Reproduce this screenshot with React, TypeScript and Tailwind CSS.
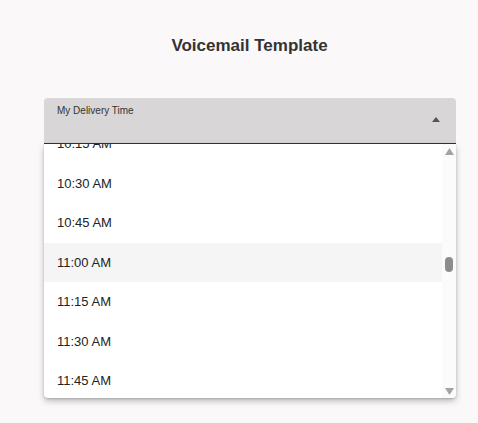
import React from "react";

const times = ["10:15 AM", "10:30 AM", "10:45 AM", "11:00 AM", "11:15 AM", "11:30 AM", "11:45 AM"];

const Triangle = ({ up, w = 8, h = 5, className }: { up?: boolean; w?: number; h?: number; className?: string }) => (
  <svg width={w} height={h} viewBox={`0 0 ${w} ${h}`} className={className}>
    {up ? (
      <path d={`M0 ${h} L${w / 2} 0 L${w} ${h} Z`} fill="currentColor" />
    ) : (
      <path d={`M0 0 L${w / 2} ${h} L${w} 0 Z`} fill="currentColor" />
    )}
  </svg>
);

const App = () => {
  return (
    <div className="w-full h-[423px] bg-[#faf8f9] font-['Liberation_Sans',Arial,sans-serif] text-[#333] overflow-hidden">
      <h1 className="pt-[36px] pl-[21px] text-center text-[17px] leading-[20px] font-bold text-[#333]">Voicemail Template</h1>

      <div className="relative mx-[44px] mt-[42px] w-[412px]">
        {/* select field */}
        <div className="h-[46px] bg-[#d8d6d7] rounded-t-[4px] border-b border-[#333] relative">
          <span className="absolute left-[13px] top-[6px] text-[10px] leading-[13px] text-[#333]">My Delivery Time</span>
          <Triangle up className="absolute right-[16px] top-[19px] text-[#555]" />
        </div>

        {/* dropdown */}
        <div className="absolute left-0 top-[46px] w-[412px] h-[254px] bg-white rounded-b-[4px] shadow-[0_3px_6px_rgba(0,0,0,0.25),0_1px_2px_rgba(0,0,0,0.15)] flex overflow-hidden">
          <div className="flex-1 overflow-hidden">
            <ul className="-mt-[20px]">
              {times.map((t) => (
                <li
                  key={t}
                  className={`h-[39.5px] flex items-center pl-[13px] text-[13px] text-[#222] ${t === "11:00 AM" ? "bg-[#f5f5f5]" : ""}`}
                >
                  {t}
                </li>
              ))}
            </ul>
          </div>
          <div className="w-[14px] bg-[#fbfbfb] flex flex-col items-center">
            <Triangle up w={9} h={7} className="mt-[4px] text-[#a3a3a3]" />
            <div className="flex-1 w-full relative">
              <div className="absolute left-[3px] top-[102px] w-[8px] h-[15px] rounded-full bg-[#8c8c8c]" />
            </div>
            <Triangle w={9} h={7} className="mb-[3px] text-[#a3a3a3]" />
          </div>
        </div>
      </div>
    </div>
  );
};

export default App;
